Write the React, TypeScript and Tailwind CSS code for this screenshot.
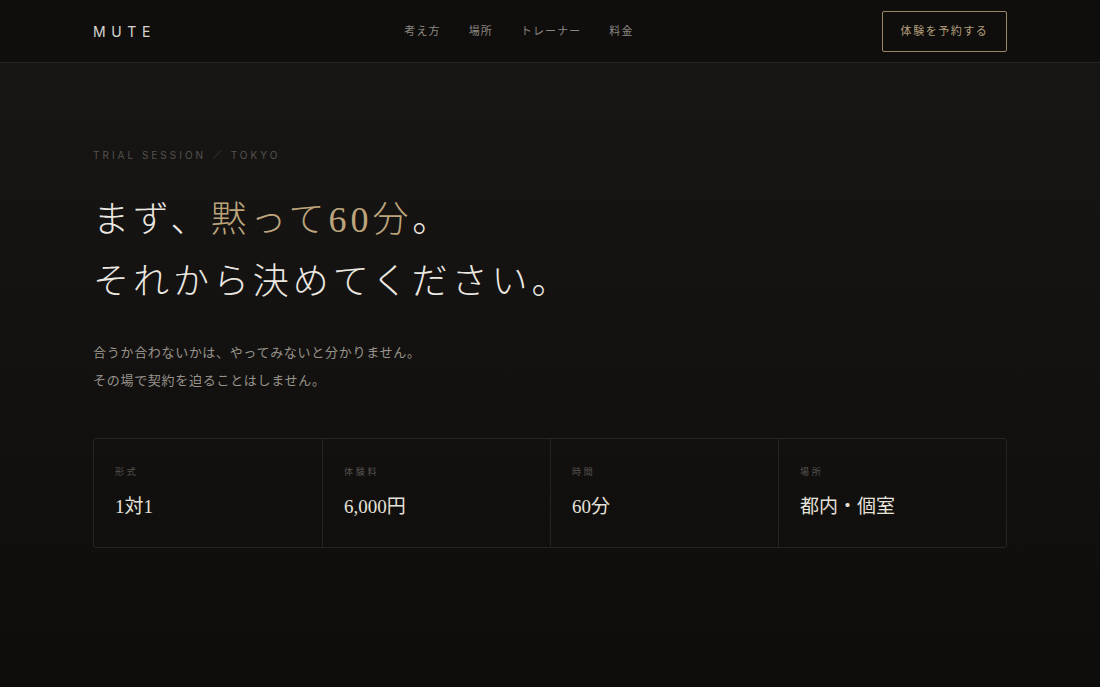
import React from "react";

const navItems = ["考え方", "場所", "トレーナー", "料金"];

const facts = [
  { label: "形式", value: "1対1" },
  { label: "体験料", value: "6,000円" },
  { label: "時間", value: "60分" },
  { label: "場所", value: "都内・個室" },
];

const sans = "font-['Inter','Noto_Sans_CJK_JP',sans-serif]";
const serif = "font-['Liberation_Serif','Noto_Sans_CJK_JP',serif]";

export default function App() {
  return (
    <div className={`min-h-[687px] w-full bg-[#0e0d0c] ${sans}`}>
      <header className="h-[63px] border-b border-[#262422] bg-[#0f0e0d] px-[93px]">
        <div className="flex h-full items-center justify-between">
          <div className="text-[14px] tracking-[0.4em] text-[#d8d4cd]">MUTE</div>
          <nav className="flex items-center gap-[28px]">
            {navItems.map((item) => (
              <a key={item} className="text-[11px] tracking-[0.1em] text-[#8c8782]">
                {item}
              </a>
            ))}
          </nav>
          <button className="h-[41px] w-[125px] rounded-[2px] border border-[#9c8865] text-[11px] tracking-[0.14em] text-[#b39f7b]">
            体験を予約する
          </button>
        </div>
      </header>

      <main className="min-h-[624px] bg-gradient-to-b from-[#171614] to-[#0e0d0c] px-[93px] pt-[85px]">
        <p className="text-[10px] tracking-[0.3em] text-[#55524e]">TRIAL SESSION ／ TOKYO</p>

        <h1 className={`mt-[26px] text-[36px] font-light leading-[62px] tracking-[0.11em] text-[#ece8e1] ${serif}`}>
          まず、<span className="text-[#bca57c]">黙って60分</span>。
          <br />
          それから決めてください。
        </h1>

        <div className="mt-[25px] text-[13px] leading-[28px] tracking-[0.055em] text-[#98938c]">
          <p>合うか合わないかは、やってみないと分かりません。</p>
          <p>その場で契約を迫ることはしません。</p>
        </div>

        <div className="mt-[44px] grid grid-cols-4 rounded-[3px] border border-[#262422]">
          {facts.map((f, i) => (
            <div
              key={f.label}
              className={`h-[108px] px-[21px] pt-[26px] ${i > 0 ? "border-l border-[#262422]" : ""}`}
            >
              <div className="text-[9px] tracking-[0.3em] text-[#57534e]">{f.label}</div>
              <div className={`mt-[14px] text-[19px] text-[#e6e1d9] ${serif}`}>{f.value}</div>
            </div>
          ))}
        </div>
      </main>
    </div>
  );
}
